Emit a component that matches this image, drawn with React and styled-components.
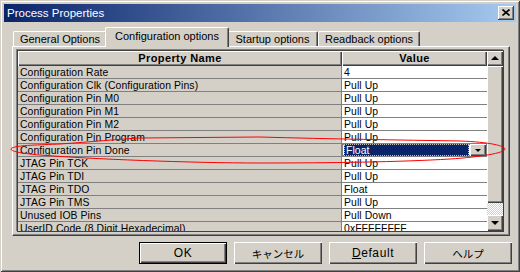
import React from 'react';
import styled, { createGlobalStyle } from 'styled-components';

const face = '#d4d0c8';
const shadow = '#808080';
const dark = '#404040';

const Global = createGlobalStyle`
  html, body { margin: 0; padding: 0; background: ${face}; }
  body { font-family: "Liberation Sans", "Noto Sans CJK JP", sans-serif; color: #000; }
  * { box-sizing: border-box; }
`;

const Window = styled.div`
  position: relative;
  width: 520px;
  height: 272px;
  background: ${face};
  padding: 4px;
  box-shadow: inset 1px 1px ${face}, inset -1px -1px ${dark}, inset 2px 2px #fff, inset -2px -2px ${shadow};
  display: flex;
  flex-direction: column;
  overflow: hidden;
`;

const TitleBar = styled.div`
  height: 18px;
  background: linear-gradient(to right, #0a246a, #a6caf0);
  display: flex;
  align-items: center;
  justify-content: space-between;
  padding: 0 2px 0 3px;
`;

const Title = styled.span`
  color: #fff;
  font-size: 11.5px;
  line-height: 14px;
  white-space: nowrap;
`;

const CloseButton = styled.div`
  width: 16px;
  height: 14px;
  background: ${face};
  box-shadow: inset -1px -1px ${dark}, inset 1px 1px #fff, inset -2px -2px ${shadow};
  display: flex;
  align-items: center;
  justify-content: center;
  padding: 0 1px 1px 0;
`;

const Body = styled.div`
  display: flex;
  flex-direction: column;
  padding: 5px 6px 0 8px;
`;

const TabStrip = styled.div`
  height: 19px;
  display: flex;
  align-items: flex-end;
  padding-left: 1px;
  position: relative;
  z-index: 2;
`;

const Tab = styled.div`
  width: ${p => p.$w}px;
  height: ${p => (p.$active ? 20 : 15)}px;
  margin: 0 ${p => (p.$active ? -2 : 0)}px ${p => (p.$active ? -1 : 0)}px;
  padding-top: ${p => (p.$active ? 2 : 1)}px;
  position: relative;
  z-index: ${p => (p.$active ? 2 : 1)};
  background: ${face};
  border-top: 1px solid #fff;
  border-left: 1px solid #fff;
  border-right: 1px solid ${dark};
  box-shadow: inset -1px 0 ${shadow};
  border-radius: 2px 2px 0 0;
  font-size: 11px;
  line-height: 13px;
  text-align: center;
  white-space: nowrap;
`;

const Panel = styled.div`
  height: 190px;
  background: ${face};
  border-top: 1px solid #fff;
  border-left: 1px solid #fff;
  border-right: 1px solid ${dark};
  border-bottom: 1px solid ${dark};
  box-shadow: inset -1px -1px ${shadow};
  padding: 3px 6px 3px 4px;
  position: relative;
  z-index: 1;
`;

const Grid = styled.div`
  width: 487px;
  height: 182px;
  border: 1px solid ${dark};
  box-shadow: -1px -1px 0 ${shadow};
  display: flex;
  background: ${face};
`;

const Table = styled.div`
  flex: 1;
  overflow: hidden;
  display: grid;
  grid-template-columns: 324px 1fr;
  grid-template-rows: 15px;
  grid-auto-rows: 13px;
  font-size: 10.4px;
  letter-spacing: 0.1px;
`;

const HeaderCell = styled.div`
  background: ${face};
  box-shadow: inset 1px 1px #fff, inset -1px -1px ${dark}, inset -2px -2px ${shadow};
  font-weight: bold;
  font-size: 11px;
  letter-spacing: 0.4px;
  line-height: 15px;
  text-align: center;
`;

const NameCell = styled.div`
  background: ${face};
  border-bottom: 1px solid ${shadow};
  border-right: 1px solid ${shadow};
  padding: 2px 0 0 2px;
  line-height: 10px;
  white-space: nowrap;
  overflow: hidden;
`;

const ValueCell = styled.div`
  background: #fff;
  border-bottom: 1px solid ${shadow};
  padding: ${p => (p.$selected ? '0 1px 0 2px' : '2px 0 0 2px')};
  line-height: 10px;
  white-space: nowrap;
  overflow: hidden;
  display: flex;
  gap: 1px;
  ${p => p.$selected && `box-shadow: inset 0 0 0 1px ${shadow};`}
`;

const Selection = styled.div`
  flex: 1;
  background: #0a246a;
  color: #fff;
  border: 1px dotted #c0c0c0;
  padding: 1px 0 0 1px;
  line-height: 9px;
`;

const DropButton = styled.div`
  width: 16px;
  height: 12px;
  background: ${face};
  box-shadow: inset 1px 1px #fff, inset -1px -1px ${dark}, inset -2px -2px ${shadow};
  display: flex;
  align-items: center;
  justify-content: center;
`;

const Arrow = styled.span`
  width: 0;
  height: 0;
  border-left: ${p => p.$size}px solid transparent;
  border-right: ${p => p.$size}px solid transparent;
  ${p => (p.$up ? 'border-bottom' : 'border-top')}: ${p => p.$size}px solid #000;
`;

const Scrollbar = styled.div`
  width: 16px;
  display: flex;
  flex-direction: column;
`;

const ScrollButton = styled.div`
  height: ${p => p.$h}px;
  background: ${face};
  box-shadow: inset 1px 1px #fff, inset -1px -1px ${dark}, inset -2px -2px ${shadow};
  display: flex;
  align-items: center;
  justify-content: center;
  padding-bottom: 1px;
`;

const Thumb = styled.div`
  height: 137px;
  background: ${face};
  box-shadow: inset 1px 1px #fff, inset -1px -1px ${dark}, inset -2px -2px ${shadow};
`;

const Track = styled.div`
  flex: 1;
  background: repeating-conic-gradient(${face} 0 25%, #fff 0 50%) 0 0 / 2px 2px;
`;

const ButtonRow = styled.div`
  display: flex;
  justify-content: flex-end;
  gap: 7px;
  margin: 6px -2px 0 0;
`;

const Button = styled.div`
  width: 88px;
  height: 22px;
  background: ${face};
  display: flex;
  align-items: center;
  justify-content: center;
  font-size: ${p => (p.$jp ? '10.5px' : '12px')};
  letter-spacing: ${p => (p.$jp ? '0' : '0.6px')};
  ${p =>
    p.$default
      ? `border: 1px solid #000; box-shadow: inset 1px 1px #fff, inset -1px -1px ${dark}, inset -2px -2px ${shadow};`
      : `box-shadow: inset 1px 1px #fff, inset -1px -1px ${dark}, inset -2px -2px ${shadow};`}
`;

const Annotation = styled.svg`
  position: absolute;
  left: 0;
  top: 0;
  pointer-events: none;
  z-index: 5;
`;

const rows = [
  ['Configuration Rate', '4'],
  ['Configuration Clk (Configuration Pins)', 'Pull Up'],
  ['Configuration Pin M0', 'Pull Up'],
  ['Configuration Pin M1', 'Pull Up'],
  ['Configuration Pin M2', 'Pull Up'],
  ['Configuration Pin Program', 'Pull Up'],
  ['Configuration Pin Done', 'Float', true],
  ['JTAG Pin TCK', 'Pull Up'],
  ['JTAG Pin TDI', 'Pull Up'],
  ['JTAG Pin TDO', 'Float'],
  ['JTAG Pin TMS', 'Pull Up'],
  ['Unused IOB Pins', 'Pull Down'],
  ['UserID Code (8 Digit Hexadecimal)', '0xFFFFFFFF'],
];

export default function App() {
  return (
    <>
      <Global />
      <Window>
        <TitleBar>
          <Title>Process Properties</Title>
          <CloseButton>
            <svg width="8" height="7" viewBox="0 0 8 7">
              <path d="M0.5 0.5 L7.5 6.5 M7.5 0.5 L0.5 6.5" stroke="#000" strokeWidth="1.6" />
            </svg>
          </CloseButton>
        </TitleBar>
        <Body>
          <TabStrip>
            <Tab $w={94}>General Options</Tab>
            <Tab $w={124} $active>Configuration options</Tab>
            <Tab $w={91}>Startup options</Tab>
            <Tab $w={102}>Readback options</Tab>
          </TabStrip>
          <Panel>
            <Grid>
              <Table>
                <HeaderCell>Property Name</HeaderCell>
                <HeaderCell>Value</HeaderCell>
                {rows.map(([name, value, sel]) => (
                  <React.Fragment key={name}>
                    <NameCell>{name}</NameCell>
                    {sel ? (
                      <ValueCell $selected>
                        <Selection>{value}</Selection>
                        <DropButton>
                          <Arrow $size={3} />
                        </DropButton>
                      </ValueCell>
                    ) : (
                      <ValueCell>{value}</ValueCell>
                    )}
                  </React.Fragment>
                ))}
              </Table>
              <Scrollbar>
                <ScrollButton $h={15}>
                  <Arrow $up $size={4} />
                </ScrollButton>
                <Thumb />
                <Track />
                <ScrollButton $h={16}>
                  <Arrow $size={4} />
                </ScrollButton>
              </Scrollbar>
            </Grid>
          </Panel>
          <ButtonRow>
            <Button $default>OK</Button>
            <Button $jp>キャンセル</Button>
            <Button>
              <span>
                <u>D</u>efault
              </span>
            </Button>
            <Button $jp>ヘルプ</Button>
          </ButtonRow>
        </Body>
        <Annotation width="520" height="272" viewBox="0 0 520 272">
          <path
            d="M140 138 L260 137 C330 139 400 140 460 141 C490 142 505 146 505 149 C505 153 480 157 450 159 C400 162 330 163 260 163 C190 163 90 159 40 155 C15 153 8 150 12 148 C18 145 40 145 60 144 C90 142 120 139 140 138"
            fill="none"
            stroke="#ff0000"
            strokeWidth="1"
          />
        </Annotation>
      </Window>
    </>
  );
}
